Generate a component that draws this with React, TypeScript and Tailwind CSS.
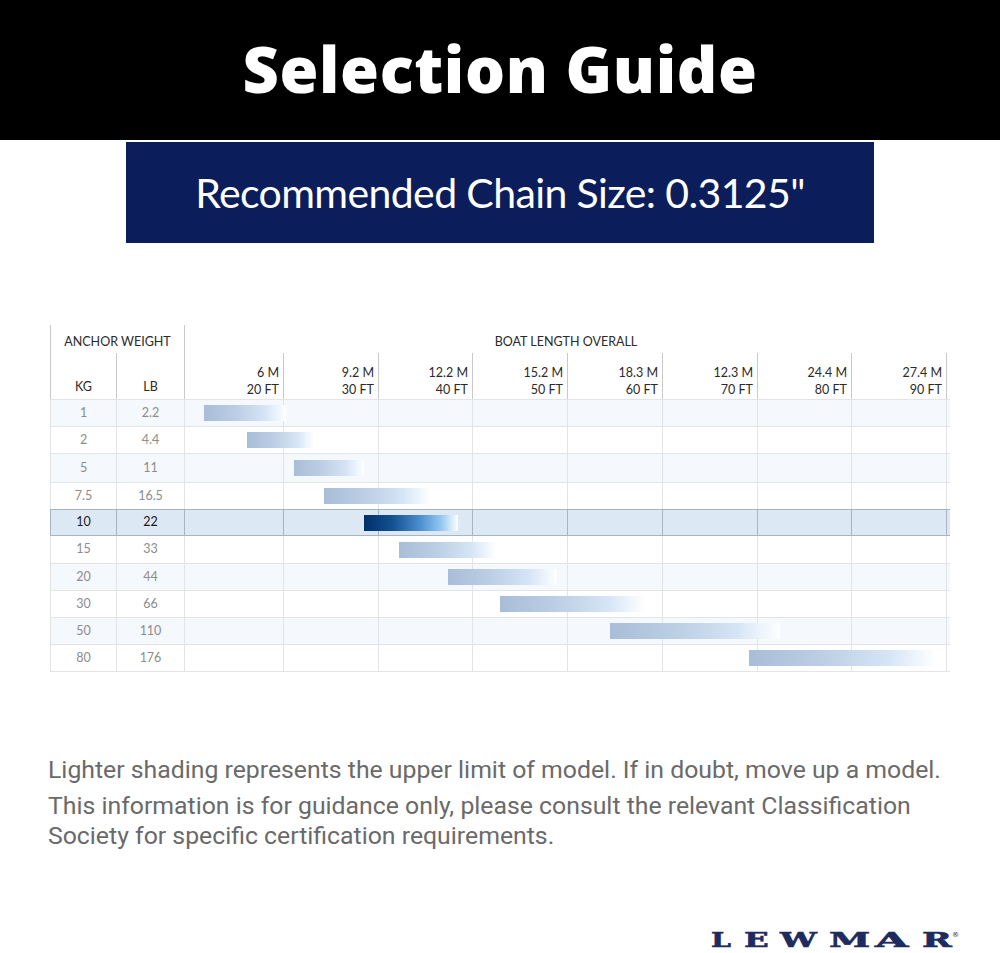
import React from "react";

type Row = {
  kg: string;
  lb: string;
  from: number;
  to: number;
  h: number;
  shade?: boolean;
  active?: boolean;
};

const rows: Row[] = [
  { kg: "1", lb: "2.2", from: 204, to: 286, h: 27, shade: true },
  { kg: "2", lb: "4.4", from: 247, to: 314, h: 27 },
  { kg: "5", lb: "11", from: 294, to: 364, h: 29, shade: true },
  { kg: "7.5", lb: "16.5", from: 324, to: 430, h: 27 },
  { kg: "10", lb: "22", from: 364, to: 458, h: 27, active: true },
  { kg: "15", lb: "33", from: 399, to: 496, h: 28 },
  { kg: "20", lb: "44", from: 448, to: 557, h: 27, shade: true },
  { kg: "30", lb: "66", from: 500, to: 645, h: 27 },
  { kg: "50", lb: "110", from: 610, to: 780, h: 27, shade: true },
  { kg: "80", lb: "176", from: 749, to: 936, h: 27 },
];

const lengths = [
  ["6 M", "20 FT"],
  ["9.2 M", "30 FT"],
  ["12.2 M", "40 FT"],
  ["15.2 M", "50 FT"],
  ["18.3 M", "60 FT"],
  ["12.3 M", "70 FT"],
  ["24.4 M", "80 FT"],
  ["27.4 M", "90 FT"],
];

// logo letters: [char, x, horizontal scale]
const logo: [string, number, number][] = [
  ["L", 711, 1.38],
  ["E", 744, 1.58],
  ["W", 780, 1.6],
  ["M", 829, 1.82],
  ["A", 875, 2.1],
  ["R", 922, 1.75],
];

const cols = "grid grid-cols-[67px_68px_99px_95px_94px_95px_95px_95px_94px_95px]";

const lightBar =
  "linear-gradient(to right, #a8bdd7 0%, #bccfe5 40%, #d6e5f6 75%, #eef5fd 90%, #ffffff 100%)";
const darkBar =
  "linear-gradient(to right, #00306a 0%, #14508f 30%, #4d8fd0 60%, #92c8f0 82%, #ffffff 100%)";

const TableRow: React.FC<{ row: Row }> = ({ row }) => {
  const bg = row.active ? "bg-[#dde8f5]" : row.shade ? "bg-[#f5f8fd]" : "bg-white";
  const line = row.active ? "border-[#a9b4c2]" : "border-[#e2e4e8]";
  const txt = row.active ? "text-[#1a1a1a]" : "text-[#8c8c8c]";
  return (
    <div
      className={`relative ${cols} ${bg} border-b ${line} ${row.active ? "border-t -mt-px" : ""}`}
      style={{ height: row.h }}
    >
      <div className={`flex items-center justify-center border-r border-l ${line} ${txt}`}>{row.kg}</div>
      <div className={`flex items-center justify-center border-r ${line} ${txt}`}>{row.lb}</div>
      {lengths.map((_, i) => (
        <div key={i} className={`border-r ${line}`} />
      ))}
      <div
        className="absolute top-1/2 h-4 -translate-y-1/2"
        style={{
          left: row.from - 50,
          width: row.to - row.from,
          background: row.active ? darkBar : lightBar,
        }}
      />
    </div>
  );
};

export default function App() {
  return (
    <div className="w-[1000px] h-[953px] bg-white overflow-hidden font-['Lato',sans-serif]">
      <div className="h-[140px] bg-black flex items-center justify-center">
        <h1 className="text-white font-['Open_Sans',sans-serif] font-extrabold text-[63px] leading-none -mt-1 tracking-[0.01em]">
          Selection Guide
        </h1>
      </div>

      <div className="mx-[126px] mt-[2px] h-[101px] bg-[#0b1e5b] flex items-center justify-center">
        <p className="text-white text-[41px] leading-none tracking-[-0.015em]">
          Recommended Chain Size: 0.3125"
        </p>
      </div>

      <div className="mx-[50px] mt-[82px] text-[12.5px] leading-none">
        {/* header */}
        <div className={`${cols} h-[28px]`}>
          <div className="col-span-2 flex items-center justify-center border-l border-r border-[#c9c9c9] text-[#2a2a2a] pt-[6px]">
            ANCHOR WEIGHT
          </div>
          <div className="col-span-8 flex items-center justify-center text-[#2a2a2a] pt-[6px]">
            BOAT LENGTH OVERALL
          </div>
        </div>
        <div className={`${cols} h-[47px] border-b border-[#e2e4e8]`}>
          <div className="flex items-end justify-center pb-[6px] border-l border-r border-[#c9c9c9] text-[#2a2a2a]">
            KG
          </div>
          <div className="flex items-end justify-center pb-[6px] border-r border-[#c9c9c9] text-[#2a2a2a]">
            LB
          </div>
          {lengths.map(([m, ft]) => (
            <div
              key={m}
              className="flex flex-col items-end justify-end gap-[4px] pb-[3px] pr-[4px] border-r border-[#c9c9c9] text-[#2a2a2a]"
            >
              <span>{m}</span>
              <span>{ft}</span>
            </div>
          ))}
        </div>
        {rows.map((r) => (
          <TableRow key={r.kg} row={r} />
        ))}
      </div>

      <div className="ml-[48px] mt-[83px] w-[910px] font-['Roboto',sans-serif] text-[24.8px] leading-[30px] text-[#6a6a6a]">
        <p className="whitespace-nowrap">
          Lighter shading represents the upper limit of model. If in doubt, move up a model.
        </p>
        <p className="mt-[6px] w-[880px]">
          This information is for guidance only, please consult the relevant Classification Society for
          specific certification requirements.
        </p>
      </div>

      <div className="flex justify-end pr-[40px] mt-[72px]">
        <svg width="252" height="28" viewBox="708 925 252 28">
          {logo.map(([ch, x, sx]) => (
            <text
              key={ch}
              transform={`translate(${x} 949) scale(${sx} 1)`}
              fontFamily="DejaVu Serif"
              fontWeight="bold"
              fontSize="20.5"
              fill="#1d2b5e"
              stroke="#1d2b5e"
              strokeWidth="0.6"
            >
              {ch}
            </text>
          ))}
          <text x="952" y="939" fontFamily="DejaVu Sans" fontSize="7" fill="#1d2b5e">
            ®
          </text>
        </svg>
      </div>
    </div>
  );
}
